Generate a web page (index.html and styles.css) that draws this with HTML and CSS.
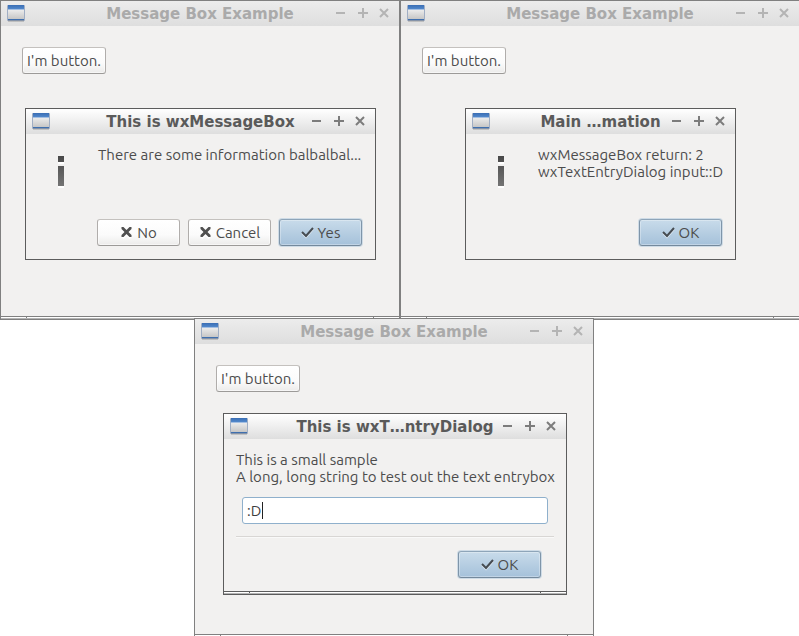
FILE: index.html
```
<!DOCTYPE html>
<html lang="en">
<head>
<meta charset="utf-8">
<title>Message Box Example</title>
<link rel="stylesheet" href="styles.css">
</head>
<body>
<svg class="defs" aria-hidden="true">
  <defs>
    <linearGradient id="pane" x1="0" y1="0" x2="0" y2="1"><stop offset="0" stop-color="#ebebeb"/><stop offset="1" stop-color="#c6c6c6"/></linearGradient>
    <linearGradient id="head" x1="0" y1="0" x2="0" y2="1"><stop offset="0" stop-color="#3a6eb4"/><stop offset="1" stop-color="#5288cb"/></linearGradient>
    <linearGradient id="ink" x1="0" y1="0" x2="0" y2="1"><stop offset="0" stop-color="#484848"/><stop offset="1" stop-color="#747474"/></linearGradient>
  </defs>
  <symbol id="app" viewBox="0 0 18 17">
    <rect x="0" y="0" width="18" height="16" rx="1" fill="#a0aec4"/>
    <rect x="1" y="0" width="16" height="4" fill="url(#head)"/>
    <rect x="1" y="4" width="16" height="1" fill="#a4bfe2"/>
    <rect x="1" y="5" width="16" height="9" fill="url(#pane)"/>
    <rect x="1" y="14" width="16" height="1" fill="#3f6fae"/>
    <rect x="1" y="15" width="16" height="1" fill="#8593a8"/>
    <rect x="1" y="16" width="16" height="1" fill="#000" opacity=".15"/>
  </symbol>
  <symbol id="min" viewBox="0 0 11 11"><path d="M1 4h9v2H1z"/></symbol>
  <symbol id="max" viewBox="0 0 11 11"><path d="M5 0h2v4h4v2H7v4H5V6H1V4h4z"/></symbol>
  <symbol id="close" viewBox="0 0 11 11"><path d="M1 1l8 8M9 1l-8 8" fill="none" stroke="currentColor" stroke-width="2"/></symbol>
  <symbol id="cross" viewBox="0 0 12 12">
    <path d="M2 3l8 8M10 3l-8 8" fill="none" stroke="#fff" stroke-width="3"/>
    <path d="M1 0h2l3 3 3-3h2v2L8 5l3 3v2H9L6 7l-3 3H1V8l3-3-3-3z" fill="#505050"/>
  </symbol>
  <symbol id="tick" viewBox="0 0 13 12">
    <path d="M1 6l4 4 7-8" fill="none" stroke="#e4eef7" stroke-width="2"/>
    <path d="M1 5l4 4 7-8" fill="none" stroke="#464c52" stroke-width="2"/>
  </symbol>
  <symbol id="info" viewBox="0 0 6 32">
    <path d="M0 6h6v2H0zM0 30h6v2H0z" fill="#fff"/>
    <path d="M0 0h6v6H0zM0 10h6v20H0z" fill="url(#ink)"/>
  </symbol>
</svg>

<main class="desktop">
  <section class="window">
    <header class="titlebar">
      <svg class="app-icon"><use href="#app"/></svg>
      <h1 class="title">Message Box Example</h1>
      <div class="controls">
        <button class="control" aria-label="Minimize"><svg><use href="#min"/></svg></button>
        <button class="control" aria-label="Maximize"><svg><use href="#max"/></svg></button>
        <button class="control" aria-label="Close"><svg><use href="#close"/></svg></button>
      </div>
    </header>
    <div class="client"><button class="button">I'm button.</button></div>
    <div class="grip"></div>

    <section class="dialog dialog-question" role="dialog" aria-labelledby="t1">
      <header class="titlebar active">
        <svg class="app-icon"><use href="#app"/></svg>
        <h2 class="title" id="t1">This is wxMessageBox</h2>
        <div class="controls">
          <button class="control" aria-label="Minimize"><svg><use href="#min"/></svg></button>
          <button class="control" aria-label="Maximize"><svg><use href="#max"/></svg></button>
          <button class="control" aria-label="Close"><svg><use href="#close"/></svg></button>
        </div>
      </header>
      <div class="message">
        <svg class="info-icon"><use href="#info"/></svg>
        <p class="text">There are some information balbalbal...</p>
      </div>
      <div class="actions">
        <button class="button action"><svg class="glyph"><use href="#cross"/></svg>No</button>
        <button class="button action"><svg class="glyph"><use href="#cross"/></svg>Cancel</button>
        <button class="button action default"><svg class="glyph"><use href="#tick"/></svg>Yes</button>
      </div>
    </section>
  </section>

  <section class="window">
    <header class="titlebar">
      <svg class="app-icon"><use href="#app"/></svg>
      <h1 class="title">Message Box Example</h1>
      <div class="controls">
        <button class="control" aria-label="Minimize"><svg><use href="#min"/></svg></button>
        <button class="control" aria-label="Maximize"><svg><use href="#max"/></svg></button>
        <button class="control" aria-label="Close"><svg><use href="#close"/></svg></button>
      </div>
    </header>
    <div class="client"><button class="button">I'm button.</button></div>
    <div class="grip"></div>

    <section class="dialog dialog-result" role="dialog" aria-labelledby="t2">
      <header class="titlebar active">
        <svg class="app-icon"><use href="#app"/></svg>
        <h2 class="title" id="t2">Main …mation</h2>
        <div class="controls">
          <button class="control" aria-label="Minimize"><svg><use href="#min"/></svg></button>
          <button class="control" aria-label="Maximize"><svg><use href="#max"/></svg></button>
          <button class="control" aria-label="Close"><svg><use href="#close"/></svg></button>
        </div>
      </header>
      <div class="message">
        <svg class="info-icon"><use href="#info"/></svg>
        <p class="text">wxMessageBox return: 2<br>wxTextEntryDialog input::D</p>
      </div>
      <div class="actions">
        <button class="button action default"><svg class="glyph"><use href="#tick"/></svg>OK</button>
      </div>
    </section>
  </section>

  <section class="window window-front">
    <header class="titlebar">
      <svg class="app-icon"><use href="#app"/></svg>
      <h1 class="title">Message Box Example</h1>
      <div class="controls">
        <button class="control" aria-label="Minimize"><svg><use href="#min"/></svg></button>
        <button class="control" aria-label="Maximize"><svg><use href="#max"/></svg></button>
        <button class="control" aria-label="Close"><svg><use href="#close"/></svg></button>
      </div>
    </header>
    <div class="client"><button class="button">I'm button.</button></div>
    <div class="grip"></div>

    <section class="dialog dialog-entry" role="dialog" aria-labelledby="t3">
      <header class="titlebar active">
        <svg class="app-icon"><use href="#app"/></svg>
        <h2 class="title" id="t3">This is wxT…ntryDialog</h2>
        <div class="controls">
          <button class="control" aria-label="Minimize"><svg><use href="#min"/></svg></button>
          <button class="control" aria-label="Maximize"><svg><use href="#max"/></svg></button>
          <button class="control" aria-label="Close"><svg><use href="#close"/></svg></button>
        </div>
      </header>
      <form class="entry">
        <label class="text" for="entry">This is a small sample<br>A long, long string to test out the text entrybox</label>
        <div class="field"><input class="input" id="entry" type="text" value=":D"><span class="caret"></span></div>
        <hr class="rule">
        <div class="entry-actions">
          <button class="button action default" type="button"><svg class="glyph"><use href="#tick"/></svg>OK</button>
        </div>
      </form>
      <div class="grip"></div>
    </section>
  </section>
</main>
</body>
</html>
```
FILE: styles.css
```
* { box-sizing: border-box; }

body {
  margin: 0;
  overflow: hidden;
  background: #fff;
  color: #4c4c4c;
  font: 15px/17px Ubuntu, "Noto Sans", sans-serif;
}

.defs { position: absolute; width: 0; height: 0; }

.desktop {
  display: grid;
  grid-template-columns: 1fr 1fr;
  width: calc(100% + 1px);
}

.window {
  --edge: #808080;
  position: relative;
  display: flex;
  flex-direction: column;
  min-height: 320px;
  border: 1px solid var(--edge);
  background: #f2f1f0;
}

.window-front {
  grid-column: 1 / -1;
  width: 50%;
  margin-top: -2px;
  margin-left: 194px;
}

.titlebar {
  display: grid;
  grid-template-columns: 1fr auto 1fr;
  align-items: center;
  height: 25px;
  padding: 0 6px;
  background: linear-gradient(#ececec, #dedede);
  color: #aaa;
}

.titlebar.active {
  background: linear-gradient(#fff, #dedede);
  color: #5a5a5a;
}

.app-icon { display: block; width: 18px; height: 17px; }

.title {
  margin: 0;
  font: bold 15px/18px "DejaVu Sans", sans-serif;
  white-space: nowrap;
}

.controls {
  display: flex;
  justify-content: flex-end;
  gap: 11px;
  padding-right: 3px;
  color: #b4b4b4;
}

.active .controls { color: #7c7c7c; }

.control {
  padding: 0;
  border: 0;
  background: none;
  color: inherit;
}

.control svg { display: block; width: 11px; height: 11px; fill: currentColor; }

.client { flex: 1; padding: 21px; }

.grip {
  height: 3px;
  margin-top: auto;
  border-top: 1px solid var(--edge);
  border-bottom: 1px solid #b4b4b4;
  background:
    linear-gradient(var(--edge), var(--edge)) 25px 0 / 1px 100% no-repeat,
    linear-gradient(var(--edge), var(--edge)) calc(100% - 25px) 0 / 1px 100% no-repeat,
    #fff;
}

.button {
  display: inline-flex;
  align-items: center;
  justify-content: center;
  min-width: 84px;
  height: 27px;
  padding: 0 4px;
  border: 1px solid;
  border-color: #c4c1be #b0adab #9c9a98;
  border-radius: 3px;
  background: linear-gradient(#fff, #fbfbfb 60%, #ecebea);
  box-shadow: inset 0 0 0 1px #fff8;
  color: inherit;
  font: inherit;
  white-space: nowrap;
}

.action { min-width: 83px; gap: 4px; }

.default {
  border-color: #8ea5b9 #7f95a9 #74899c;
  background: linear-gradient(#c8dbea, #a5c1da);
  box-shadow: inset 0 0 0 1px #ffffff4d, 0 0 0 1px #a9c5dc80;
}

.glyph { width: 13px; height: 12px; }

.dialog {
  --edge: #5c5c5c;
  position: absolute;
  display: flex;
  flex-direction: column;
  border: 1px solid var(--edge);
  background: #f2f1f0;
}

.dialog-question { top: 107px; left: 24px; width: 351px; height: 152px; }
.dialog-result { top: 107px; left: 64px; width: 271px; height: 152px; }
.dialog-entry { top: 94px; left: 28px; width: 344px; height: 182px; }

.message { display: flex; flex: 1; padding: 12px 12px 0 32px; }
.info-icon { flex: none; width: 6px; height: 32px; margin: 10px 34px 0 0; }

.text { display: block; margin: 0; white-space: nowrap; }

.actions { display: flex; justify-content: flex-end; gap: 8px; padding: 0 13px 13px; }

.entry { padding: 12px 12px 0; }

.field { position: relative; margin: 12px 6px; }

.input {
  display: block;
  width: 100%;
  height: 27px;
  padding: 0 4px;
  border: 1px solid #8fb0cc;
  border-radius: 3px;
  outline: 0;
  background: #fff;
  color: #3c3c3c;
  font: inherit;
}

.caret {
  position: absolute;
  top: 5px;
  left: 20px;
  width: 1px;
  height: 17px;
  background: #222;
}

.rule {
  height: 2px;
  margin: 0;
  border: 0;
  border-top: 1px solid #d8d6d4;
  border-bottom: 1px solid #f9f9f9;
}

.entry-actions { display: flex; justify-content: flex-end; padding: 13px 13px 0; }
```
